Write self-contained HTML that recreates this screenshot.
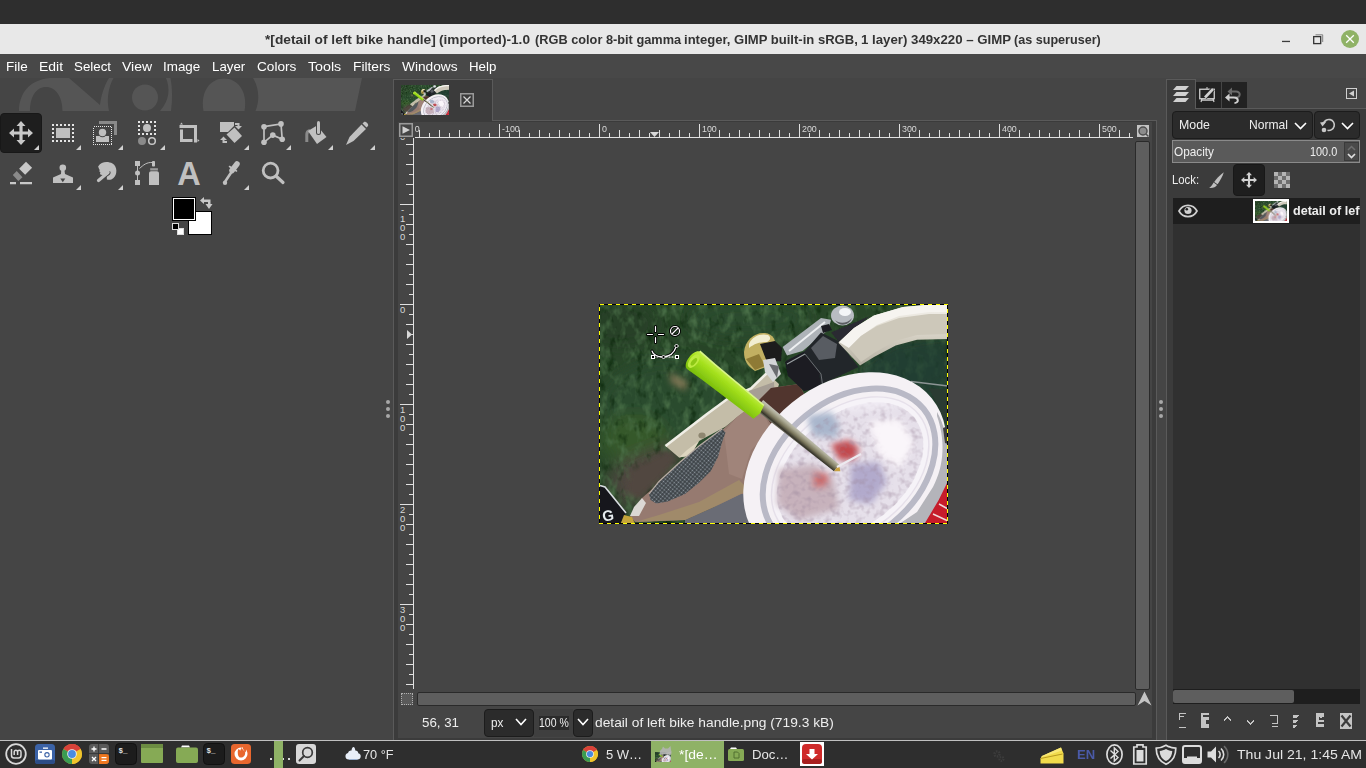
<!DOCTYPE html>
<html><head><meta charset="utf-8"><title>GIMP</title>
<style>
*{box-sizing:border-box;margin:0;padding:0}
html,body{width:1366px;height:768px;overflow:hidden;background:#454545;font-family:"Liberation Sans",sans-serif;}
.a{position:absolute}
svg{overflow:visible}
#top{left:0;top:0;width:1366px;height:24px;background:#2e2e2e}
#title{left:0;top:24px;width:1366px;height:30px;background:#e8e8e8;color:#333;font-weight:bold;font-size:13.17px;line-height:30px;white-space:nowrap}
#title span{position:absolute;top:0.5px}
#menu{left:0;top:54px;width:1366px;height:24px;background:#484848;color:#fff;font-size:13.4px;line-height:24px;white-space:nowrap}
#menu span{position:absolute;top:1px}
#tbox{left:0;top:78px;width:393px;height:662px;background:#454545}
#taskbar{left:0;top:740px;width:1366px;height:28px;background:#2e2e2e;color:#e6e6e6;font-size:14.5px;white-space:nowrap}
#winedge{left:0;top:740px;width:1366px;height:1px;background:#c0c0c0}
.tool{position:absolute;width:42px;height:40px}
.tri{position:absolute;width:0;height:0;border-left:5px solid transparent;border-bottom:5px solid #d0d0d0}
</style></head><body>
<svg width="0" height="0" style="position:absolute"><defs>
<filter id="pb" x="-5%" y="-5%" width="110%" height="110%"><feGaussianBlur stdDeviation="0.7"/></filter>
<filter id="pb3" x="-20%" y="-20%" width="140%" height="140%"><feGaussianBlur stdDeviation="3"/></filter>
<filter id="pb8" x="-30%" y="-30%" width="160%" height="160%"><feGaussianBlur stdDeviation="8"/></filter>
<filter id="grassf" x="0" y="0" width="100%" height="100%" color-interpolation-filters="sRGB"><feTurbulence type="fractalNoise" baseFrequency="0.11 0.07" numOctaves="3" seed="7" result="n"/><feColorMatrix in="n" type="matrix" values="0 0 0 0 0.30  0 0 0 0 0.45  0 0 0 0 0.29  2.6 0 0 0 -1.25" result="l"/><feColorMatrix in="n" type="matrix" values="0 0 0 0 0.03  0 0 0 0 0.14  0 0 0 0 0.03  0 -2.6 0 0 1.15" result="d"/><feMerge><feMergeNode in="d"/><feMergeNode in="l"/></feMerge></filter>
<filter id="lidf" x="0" y="0" width="100%" height="100%" color-interpolation-filters="sRGB"><feTurbulence type="fractalNoise" baseFrequency="0.16" numOctaves="2" seed="3" result="n"/><feColorMatrix in="n" type="matrix" values="0 0 0 0 0.62  0 0 0 0 0.54  0 0 0 0 0.62  0 2.6 0 0 -1.2"/></filter>
<clipPath id="lidclip"><ellipse cx="3" cy="4.500" rx="83" ry="56" transform="translate(246 164.400) rotate(-39)"/></clipPath>
<pattern id="diam" width="3" height="3" patternUnits="userSpaceOnUse" patternTransform="rotate(40)"><rect width="3" height="3" fill="#30363a"/><rect x="0.600" y="0.600" width="1.800" height="1.800" fill="#8d959c"/></pattern>
<linearGradient id="gstraw" x1="0" y1="0" x2="1" y2="0" gradientTransform="rotate(90)"><stop offset="0" stop-color="#c4ee4a"/><stop offset="0.350" stop-color="#a4e01c"/><stop offset="1" stop-color="#78bc0c"/></linearGradient>
<linearGradient id="mstraw" x1="0" y1="0" x2="0" y2="1"><stop offset="0" stop-color="#c4c4bc"/><stop offset="0.250" stop-color="#aeac96"/><stop offset="0.550" stop-color="#7c785e"/><stop offset="0.820" stop-color="#36342a"/><stop offset="1" stop-color="#8a8878"/></linearGradient>
<linearGradient id="tapeg" x1="0" y1="0" x2="0" y2="1"><stop offset="0" stop-color="#f6f4f0"/><stop offset="0.300" stop-color="#e4e0d6"/><stop offset="0.600" stop-color="#cfcabd"/><stop offset="1" stop-color="#b4afa2"/></linearGradient>
<clipPath id="pclip"><rect width="349" height="220"/></clipPath>
<g id="photo" clip-path="url(#pclip)">
<rect width="349" height="220" fill="#284628"/>
<g filter="url(#pb8)">
<ellipse cx="70" cy="100" rx="70" ry="45" fill="#2c4c2d"/>
<ellipse cx="20" cy="20" rx="40" ry="25" fill="#263f26"/>
<ellipse cx="150" cy="15" rx="60" ry="18" fill="#2c4c2e"/>
<ellipse cx="35" cy="135" rx="35" ry="25" fill="#34582c"/>
<path d="M22 157L72 139L80 153L67 173L43 195L31 207L20 196L6 178Z" fill="#4e4640"/>
<ellipse cx="310" cy="65" rx="45" ry="30" fill="#2a4636"/>
</g>
<rect width="349" height="220" filter="url(#grassf)" opacity="0.9"/>
<g filter="url(#pb3)"><path d="M262 62L296 42L349 34L349 125L262 80Z" fill="#213a33" opacity="0.650"/><path d="M30 165L70 145L78 156L60 178L40 196L26 190Z" fill="#51473f"/><path d="M70 68l19 10l-3 9l-14-8z" fill="#7d7352"/></g>
<g filter="url(#pb)">
<!-- right bg cable -->
<path d="M312 77.500L349 82" stroke="#8c9494" stroke-width="1.500"/>
<path d="M330 84L349 86V125L340 105Z" fill="#2a3a30"/>
<!-- pavement -->
<path d="M86 216L115 203L142 188L165 195L170 220L86 220Z" fill="#6a6c74"/>
<!-- brake lever -->
<path d="M66.500 142L108 110L129 94.500L152 84.500L168 69L180 80L175 100L140 112L126 123L100 137L91.500 151.500L80 153.500Z" fill="#c4bda8"/>
<path d="M66.500 142L108 110L129 94.500L152 84.500L168 69" fill="none" stroke="#f0eee6" stroke-width="2.500"/>
<path d="M150 87L175 78L176 100L150 104Z" fill="#a69e94"/>
<ellipse cx="103" cy="131.500" rx="3.600" ry="3" fill="#8e8670"/>
<path d="M80 153.500L91.500 151.500L100 137L88 146Z" fill="#ddd6c0"/>
<!-- grip -->
<path d="M31 212L43 194L60 179L80 160L100 143L123 126L138 113L150 104L160 96L172 84L200 80L210 100L190 125L180 130L165 150L160 190L142 190L115 203L86 216L36 218Z" fill="#967a70"/>
<path d="M150 104L160 96L172 84L200 80L210 100L190 125L175 124L165 110Z" fill="#51362f"/>
<path d="M125 128L138 113L150 104L165 110L172 126L152 146L143 175L130 170Z" fill="#a0847a"/>
<path d="M150 186L115 203L86 216L36 218L60 211L100 198L140 176Z" fill="#a08a6a"/>
<path d="M51.600 196L50 190L60 177.500L80 159L100 142L123 125L126.500 128.600L123 138.600L119 153L111.700 167.300L100 178.700L86 190L68.700 197.400L57.300 199.500Z" fill="url(#diam)"/>
<path d="M50 190L60 177.500L80 159L100 142L123 125" fill="none" stroke="#b8aca4" stroke-width="1.200"/>
<path d="M31 212L35 203L43 194L47 199L40 212Z" fill="#dcd8d4"/>
<!-- reflector -->
<path d="M0 181L6 183L27 209L21.500 220L0 220Z" fill="#12161a"/>
<path d="M1 181.500L6 183L27 209" fill="none" stroke="#d8dce0" stroke-width="1.600"/>
<path d="M21.500 220L25 211L33 213L36 220Z" fill="#c4a43a"/><text x="3" y="216.500" font-size="15" font-weight="bold" fill="#e8ecf0" font-family="Liberation Sans, sans-serif" transform="rotate(-8 10 210)">G</text>
<!-- bell -->
<path d="M145 48C146 36 156 28 166 29C174 30 178 36 176 46L170 62L156 67C148 62 145 56 145 48Z" fill="#c2b062"/>
<path d="M150 40C153 32 162 29 169 31C172 33 172 36 168 38C160 38 155 40 150 44Z" fill="#f2eed2"/>
<path d="M147 55L156 66L166 62L160 50Z" fill="#8e7a34"/>
<path d="M161 40L176 37L183 44L182 57L168 58Z" fill="#1a1a1c"/>
<path d="M164 56L176 54L182 70L174 78L166 68Z" fill="#d4d6d8"/>
<path d="M170 60L180 62L178 74Z" fill="#6a6c70"/>
<!-- chrome mount -->
<path d="M183.600 43L222 14L232 15.700L229.400 25.800L203.600 47L188 51.500Z" fill="#aeb3b8"/>
<path d="M190 47L226 18" stroke="#eef0f2" stroke-width="2"/>
<ellipse cx="243.500" cy="11.500" rx="11.500" ry="10" fill="#b8bcc2"/>
<ellipse cx="246" cy="8" rx="6" ry="4" fill="#f4f6f8"/>
<path d="M236 16C240 20 248 20 253 14C250 22 240 23 236 16Z" fill="#5a5c60"/>
<path d="M222 22l8-2l3 6l-9 3z" fill="#1c1e20"/>
<!-- strap -->
<path d="M205.800 47L222 28.600L239.400 37L259.500 63L232 76L205 87L189 71.600L186.500 57Z" fill="#23272b"/>
<path d="M212 44L224 32L238 40L236 54L220 56Z" fill="#585c62"/>
<path d="M232 28.600L271 12L240 38Z" fill="#2a2a30"/>
<path d="M186 58L205 48L220 68L222 84L205 87L189 72Z" fill="#1a1e22"/>
<path d="M188 60L206 50" stroke="#9a9ea2" stroke-width="1.200"/>
<path d="M206 50L222 70L224 84" fill="none" stroke="#6a6e72" stroke-width="1"/>
<!-- tape -->
<path d="M239.400 38.700L255 24L275 11.500L304 3L332.500 0.500L349 0.500L349 35L318 35.800L296.700 41.500L275 53L261 61.600Z" fill="url(#tapeg)"/>
<path d="M240 38L255 24L275 11.500L304 3L332.500 0.500L349 0.500L349 8L330 8L300 12L278 21L262 32L250 44Z" fill="#f6f4f0"/>
<path d="M250 44L262 32L278 22L300 14L330 10L349 10L349 30L318 31L296 37L275 49L262 58Z" fill="#cdc8ba"/>
<!-- cup lid -->
<g transform="translate(246 164.400) rotate(-39)">
<ellipse rx="111.600" ry="84.500" fill="#f5f1f5"/>
<ellipse cx="2.500" cy="3.300" rx="96" ry="69" fill="none" stroke="#b9b9c6" stroke-width="6"/>
<ellipse cx="3" cy="4.500" rx="89" ry="62" fill="#e6e0ea"/>
<ellipse cx="3" cy="4.500" rx="85" ry="58" fill="none" stroke="#f6f3f8" stroke-width="5"/>
</g>
<!-- right wall of cup -->
<path d="M338 112C346 135 346 160 334 183L318 208L300 220L349 220L349 150C348 135 345 120 338 108Z" fill="#b4b4ba"/>
<path d="M349 177L339.700 196L325.400 220L349 220Z" fill="#c61c2c"/>
<path d="M340 200L349 205M334 210L349 217" stroke="#f0d8d8" stroke-width="1.500"/>
<path d="M344 124L349 122L349 140L346 139Z" fill="#3c3c3c"/>
</g>
<g filter="url(#pb3)">
<path d="M208 112L232 108L240 120L238 134L214 132Z" fill="#a9b6cc"/>
<path d="M232 140L250 136L260 144L256 156L240 156Z" fill="#c24a4e"/>
<path d="M252 160L280 158L288 178L272 200L250 196Z" fill="#b2aacc"/>
<path d="M180 165L215 160L235 175L240 205L200 216L178 200Z" fill="#c7b2bc"/>
<path d="M215 168L230 170L228 182L214 184Z" fill="#cc6a6a"/>
<path d="M270 120L300 118L312 140L300 165L280 150Z" fill="#f6f0f6"/>
</g>
<g clip-path="url(#lidclip)"><rect x="140" y="60" width="209" height="160" filter="url(#lidf)" opacity="0.450"/><g filter="url(#pb3)"><path d="M272 118L300 116L314 138L302 162L282 150Z" fill="#faf6fa"/><path d="M236 96L280 92L300 104L250 108Z" fill="#f4f0f6" opacity="0.700"/></g></g>
<g filter="url(#pb)">
<!-- metal straw -->
<g transform="translate(160 101) rotate(39.200)"><path d="M0 -6.500L100 -4.500L100 4L0 6Z" fill="url(#mstraw)"/><path d="M100 -4l5 4l-5 4z" fill="#c8a040"/></g>
<path d="M238 163L262 150" stroke="#eceaf0" stroke-width="2"/>
<!-- green straw -->
<g transform="translate(95.500 57) rotate(38.500)"><path d="M0 -11C-4.500 -11 -6.500 -5 -6.500 0C-6.500 6 -4.500 11 0 11L18 10L82 8.500L84 0L82 -8.500L18 -10Z" fill="url(#gstraw)"/><ellipse cx="-0.500" cy="0.500" rx="4.200" ry="8" fill="#bcea40"/><ellipse cx="0" cy="1" rx="2" ry="4.500" fill="#8cc814"/><path d="M-2 -11L18 -10L82 -8.500" fill="none" stroke="#d8f488" stroke-width="1.600"/></g>
</g>
</g>
</defs></svg>

<div id="top" class="a"></div>
<div id="title" class="a"><span class="fit" style="left:264.80px;transform:scaleX(1.0431);transform-origin:0 50%">*[detail of left bike handle]</span> <span class="fit" style="left:439.40px;transform:scaleX(1.0374);transform-origin:0 50%">(imported)-1.0</span> <span class="fit" style="left:534.50px;transform:scaleX(0.9702);transform-origin:0 50%">(RGB color 8-bit gamma</span> <span class="fit" style="left:683.80px;transform:scaleX(0.9921);transform-origin:0 50%">integer, GIMP built-in sRGB,</span> <span class="fit" style="left:860.70px;transform:scaleX(1.0060);transform-origin:0 50%">1 layer) 349x220 – GIMP</span> <span class="fit" style="left:1014.40px;transform:scaleX(0.9573);transform-origin:0 50%">(as superuser)</span>
<svg class="a" style="left:1270px;top:0" width="96" height="30" viewBox="0 0 96 30">
<rect x="12" y="16.800" width="8" height="1.300" fill="#3c3c3c"/>
<path d="M45.500 10.800h7.200v7.200" fill="none" stroke="#808080" stroke-width="1"/>
<rect x="43.700" y="12.600" width="7" height="7" fill="none" stroke="#333" stroke-width="1.300"/>
<circle cx="80" cy="15" r="9" fill="#8fb266"/>
<path d="M76.200 11.200l7.600 7.600m0-7.600l-7.600 7.600" stroke="#fff" stroke-width="1.300" fill="none"/>
</svg>
</div>
<div id="menu" class="a"><span class="fit" style="left:6.10px;transform:scaleX(1.0056);transform-origin:0 50%">File</span><span class="fit" style="left:38.80px;transform:scaleX(1.0399);transform-origin:0 50%">Edit</span><span class="fit" style="left:73.60px;transform:scaleX(0.9941);transform-origin:0 50%">Select</span><span class="fit" style="left:121.80px;transform:scaleX(1.0453);transform-origin:0 50%">View</span><span class="fit" style="left:163.10px;transform:scaleX(1.0022);transform-origin:0 50%">Image</span><span class="fit" style="left:212.00px;transform:scaleX(0.9910);transform-origin:0 50%">Layer</span><span class="fit" style="left:256.90px;transform:scaleX(1.0154);transform-origin:0 50%">Colors</span><span class="fit" style="left:307.90px;transform:scaleX(1.0619);transform-origin:0 50%">Tools</span><span class="fit" style="left:353.20px;transform:scaleX(1.0260);transform-origin:0 50%">Filters</span><span class="fit" style="left:401.60px;transform:scaleX(1.0234);transform-origin:0 50%">Windows</span><span class="fit" style="left:469.30px;transform:scaleX(0.9910);transform-origin:0 50%">Help</span></div>
<div id="tbox" class="a">
<!-- wilber -->
<svg class="a" style="left:0;top:0;overflow:hidden" width="393" height="33" viewBox="0 78 393 33">
<g fill="#555555">
<path d="M19 111C19 95 28 80 50 78L69 78L100 105C101 96 104 86 109 78L113.500 78C108 88 106.500 100 109 111L62.500 111C62.500 97 56 87 46 87C36 87 30 97 30 111Z"/>
<circle cx="145" cy="97.500" r="13"/>
<path d="M166 78C170 88 170 100 160 111L171 111C172.500 100 172.500 88 170.500 78Z"/>
<path d="M203.500 111C200 92 210 78.500 224 78.500C238 78.500 248 92 244.500 111Z"/>
<path d="M253 78L362 78L355 111L255.500 111C260 100 259 88 253 78Z"/>
</g>
</svg>
<!-- active tool button -->
<div class="a" style="left:0;top:35px;width:42px;height:40px;background:#1e1e1e;border:1px solid #181818;border-radius:4px"></div>
<!-- tool icons: each svg 24x24 -->
<!-- move -->
<svg class="a" style="left:9px;top:43px" width="24" height="24" viewBox="0 0 24 24"><path d="M12 0l4.500 5h-2.900v5.400h5.400v-2.900l5 4.500l-5 4.500v-2.900h-5.400v5.400h2.900l-4.500 5l-4.500-5h2.900v-5.400h-5.400v2.900l-5-4.500l5-4.500v2.900h5.400v-5.400h-2.900z" fill="#c8c8c8"/></svg>
<!-- rect select -->
<svg class="a" style="left:51px;top:43px" width="24" height="24" viewBox="0 0 24 24" shape-rendering="crispEdges"><g fill="#e4e4e4"><path d="M1 3h2v2h-2zM5 3h2v2h-2zM9 3h2v2h-2zM13 3h2v2h-2zM17 3h2v2h-2zM21 3h2v2h-2zM1 19h2v2h-2zM5 19h2v2h-2zM9 19h2v2h-2zM13 19h2v2h-2zM17 19h2v2h-2zM21 19h2v2h-2zM1 7h2v2h-2zM1 11h2v2h-2zM1 15h2v2h-2zM21 7h2v2h-2zM21 11h2v2h-2zM21 15h2v2h-2z"/></g><rect x="5" y="7" width="14" height="10" fill="#c0c0c0"/></svg>
<!-- foreground select -->
<svg class="a" style="left:93px;top:43px" width="24" height="24" viewBox="0 0 24 24"><path d="M6 0h18v14h-3v-11h-15z" fill="#8a8a8a"/><rect x="0.500" y="5.500" width="18" height="18" fill="none" stroke="#e4e4e4" stroke-width="1" stroke-dasharray="1 1" shape-rendering="crispEdges"/><circle cx="9.500" cy="11.500" r="3.700" fill="#c0c0c0"/><path d="M3 15h3.500a3.500 2.500 0 0 0 6 0h3.500v6h-13z" fill="#c0c0c0"/></svg>
<!-- select by color -->
<svg class="a" style="left:135px;top:43px" width="24" height="24" viewBox="0 0 24 24"><g fill="#e4e4e4" shape-rendering="crispEdges"><path d="M3 0h2v2h-2zM7 0h2v2h-2zM11 0h2v2h-2zM15 0h2v2h-2zM19 0h2v2h-2zM3 12h2v2h-2zM7 12h2v2h-2zM11 12h2v2h-2zM15 12h2v2h-2zM19 12h2v2h-2zM3 4h2v2h-2zM3 8h2v2h-2zM19 4h2v2h-2zM19 8h2v2h-2z"/></g><circle cx="12" cy="7" r="4" fill="#c0c0c0"/><circle cx="7" cy="20" r="4" fill="#8a8a8a"/><circle cx="17" cy="20" r="3.300" fill="none" stroke="#c8c8c8" stroke-width="1.500"/></svg>
<!-- crop -->
<svg class="a" style="left:177px;top:43px" width="24" height="24" viewBox="0 0 24 24"><path d="M2.500 4v3h14.500v14.500h3v-17.500z" fill="#c0c0c0"/><path d="M3 8.500h3v9.500h9.500v3h-12.500z" fill="#c0c0c0"/><path d="M3 3.500l1.500-2l1.500 2zM20.500 18l2 1.500l-2 1.500z" fill="#c0c0c0"/></svg>
<!-- unified transform -->
<svg class="a" style="left:219px;top:43px" width="24" height="24" viewBox="0 0 24 24"><path d="M1 1h14v4l-6 6h-8z" fill="#c0c0c0"/><path d="M15.500 6.500l7.500 8.500l-7.500 7l-8-8.500z" fill="#c0c0c0"/><path d="M16 2h4.500v3h2.500l-3.500 3.500l-3.500-3.500h2.500v-1h-2.500z" fill="#c0c0c0"/><path d="M8 22h-4.500v-3h-2.500l3.500-3.500l3.500 3.500h-2.500v1h2.500z" fill="#c0c0c0"/></svg>
<!-- cage -->
<svg class="a" style="left:261px;top:43px" width="24" height="24" viewBox="0 0 24 24"><path d="M3 5.700L20 2.900L21.200 18.200L11.800 14.100L3 21.300Z" fill="none" stroke="#c0c0c0" stroke-width="1.700"/><g fill="#c0c0c0"><circle cx="3" cy="5.700" r="2.800"/><circle cx="20" cy="2.900" r="2.800"/><circle cx="21.200" cy="18.200" r="2.800"/><circle cx="11.800" cy="14.100" r="2.800"/><circle cx="3" cy="21.300" r="2.800"/></g></svg>
<!-- bucket -->
<svg class="a" style="left:303px;top:43px" width="24" height="24" viewBox="0 0 24 24"><path d="M3.800 21v-7.500c0-2 1-3.500 3.200-4" fill="none" stroke="#8a8a8a" stroke-width="3"/><path d="M5 10l9-5.500l9.500 11.500l-9.500 7z" fill="#c0c0c0"/><path d="M15.500 1.500v10" stroke="#454545" stroke-width="5" stroke-linecap="round"/><path d="M15.500 1.500v10" stroke="#c0c0c0" stroke-width="3" stroke-linecap="round"/></svg>
<!-- pencil -->
<svg class="a" style="left:345px;top:43px" width="24" height="24" viewBox="0 0 24 24"><path d="M1 24l3.500-8l12-12.500l4.500 4.500l-12.500 12z" fill="#c0c0c0"/><path d="M17.500 2.500l1.500-1.500c1.500-1 5 2 4 4l-1.500 1.500z" fill="#c0c0c0"/></svg>
<!-- row 2 -->
<!-- eraser -->
<svg class="a" style="left:9px;top:83px" width="24" height="24" viewBox="0 0 24 24"><path d="M17 0.700l6.100 6.100l-7 7l-6-6.100z" fill="#c8c8c8"/><path d="M7.700 10.100l5.800 6.100l-4.200 3.700l-5.500-5.800z" fill="#8a8a8a"/><path d="M1 21h6v2.200h-6zM11 21h12v2.200h-12z" fill="#c8c8c8"/></svg>
<!-- clone -->
<svg class="a" style="left:51px;top:83px" width="24" height="24" viewBox="0 0 24 24"><circle cx="11.800" cy="6.800" r="3.300" fill="#c0c0c0"/><path d="M10.300 8h3l0.700 5l8 3.500v5.500h-20v-5.500l8-3.500z" fill="#c0c0c0"/><path d="M9.300 17.500h5l-2.500 3.800z" fill="#454545"/></svg>
<!-- smudge -->
<svg class="a" style="left:93px;top:83px" width="24" height="24" viewBox="0 0 24 24"><path d="M5.500 5C8 0.500 15 0 19.500 2.500C24.500 5.500 24.500 13.500 20.500 17C18.500 19 15 19.500 13.500 18C12.500 17 13 15.500 14.500 14.500L9.500 14C7 14 6.500 12.500 7.500 11.500C6 10.500 6 9.500 7 9C6 8.200 5.500 7.500 6 7C5 6.500 5 5.800 5.500 5Z" fill="#c0c0c0"/><path d="M13.500 17.800C12.500 16.500 13.500 15 15 14.200C17 13 17.500 11.500 16.500 10.500" fill="none" stroke="#454545" stroke-width="1.300"/><path d="M5.500 19.500L15 11.500" stroke="#c0c0c0" stroke-width="3.200" stroke-linecap="round"/></svg>
<!-- paths -->
<svg class="a" style="left:135px;top:83px" width="24" height="24" viewBox="0 0 24 24"><path d="M0 0h5v5h-5zM0 19h5v5h-5z" fill="#c0c0c0"/><circle cx="2.500" cy="12" r="2.500" fill="#c0c0c0"/><path d="M2.500 4v16" stroke="#c0c0c0" stroke-width="1"/><path d="M4.500 7.500c4-3.500 7-6.500 13.500-6" fill="none" stroke="#c0c0c0" stroke-width="1"/><rect x="17" y="0" width="3" height="5.500" rx="0.800" fill="#c0c0c0"/><rect x="15.200" y="7.200" width="7.700" height="2.300" fill="#999"/><path d="M14 12.500c0-1.500 1-2.200 2-2.200h6c1 0 2 0.700 2 2.200v11.500h-10z" fill="#c0c0c0"/></svg>
<!-- text -->
<div class="a" style="left:177px;top:79.5px;width:24px;height:32px;font:bold 32.5px/32px 'Liberation Sans',sans-serif;color:#c0c0c0;text-align:center">A</div>
<!-- picker -->
<svg class="a" style="left:219px;top:83px" width="24" height="24" viewBox="0 0 24 24"><path d="M6.500 20l8-12" stroke="#c0c0c0" stroke-width="2.600" stroke-linecap="round"/><path d="M13 9.500l5-6.500" stroke="#c0c0c0" stroke-width="5.500" stroke-linecap="round"/><path d="M10.500 5.500l7 4.500" stroke="#c0c0c0" stroke-width="1.500" stroke-linecap="round"/><circle cx="6" cy="21.700" r="2.200" fill="#c0c0c0"/></svg>
<!-- zoom -->
<svg class="a" style="left:261px;top:83px" width="24" height="24" viewBox="0 0 24 24"><circle cx="9.600" cy="9.600" r="7.400" fill="none" stroke="#c0c0c0" stroke-width="2.800"/><path d="M15.500 15.500l6.500 6" stroke="#c0c0c0" stroke-width="3.200" stroke-linecap="round"/></svg>
<!-- triangles -->
<div class="tri" style="left:34px;top:67px"></div><div class="tri" style="left:76px;top:67px"></div><div class="tri" style="left:118px;top:67px"></div><div class="tri" style="left:160px;top:67px"></div><div class="tri" style="left:244px;top:67px"></div><div class="tri" style="left:286px;top:67px"></div><div class="tri" style="left:328px;top:67px"></div><div class="tri" style="left:370px;top:67px"></div>
<div class="tri" style="left:76px;top:107px"></div><div class="tri" style="left:118px;top:107px"></div><div class="tri" style="left:244px;top:107px"></div>
<!-- colors -->
<div class="a" style="left:188px;top:133px;width:24px;height:24px;background:#fff;border:1px solid #000"></div>
<div class="a" style="left:172px;top:119px;width:24px;height:24px;background:#000;border:1px solid #000;box-shadow:inset 0 0 0 1px #fff"></div>
<div class="a" style="left:177px;top:150px;width:7px;height:7px;background:#fff;border:1px solid #ddd"></div>
<div class="a" style="left:172px;top:145px;width:7px;height:7px;background:#000;border:1px solid #ddd"></div>
<svg class="a" style="left:200px;top:119px" width="12" height="12" viewBox="0 0 12 12"><path d="M0 3.500l4-3.500v2.500h6.500v4.500h2l-3.500 5l-3.500-5h2.500v-2h-4v2z" fill="#c8c8c8"/></svg>
</div>
<!-- separator handle dots left -->
<div class="a" style="left:385.500px;top:400px;width:4px;height:4px;border-radius:50%;background:#a8a8a8;box-shadow:0 7px 0 #a8a8a8,0 14px 0 #a8a8a8"></div>
<!-- image window -->
<div class="a" style="left:393px;top:120px;width:764px;height:620px;background:#3b3b3b;border:1px solid #5a5a5a;border-bottom:none"></div>
<div class="a" style="left:393px;top:79px;width:100px;height:42px;background:#3b3b3b;border:1px solid #5a5a5a;border-bottom:none"></div>
<div class="a" style="left:398px;top:122px;width:754px;height:584px;background:#454545"></div>
<!-- tab thumb + close -->
<svg class="a" style="left:401px;top:85px" width="48" height="30" viewBox="0 0 349 220" preserveAspectRatio="none"><use href="#photo"/></svg>
<svg class="a" style="left:460px;top:93px" width="14" height="14" viewBox="0 0 14 14"><rect x="0.750" y="0.750" width="12.500" height="12.500" fill="none" stroke="#9a9a9a" stroke-width="1.500"/><path d="M3.500 3.500l7 7m0-7l-7 7" stroke="#d8d8d8" stroke-width="1.200" fill="none"/></svg>
<!-- ruler corner -->
<svg class="a" style="left:399px;top:123px" width="14" height="14" viewBox="0 0 14 14"><rect x="0.750" y="0.750" width="12.500" height="12.500" fill="none" stroke="#9a9a9a" stroke-width="1.500"/><path d="M3.500 3.200l7.500 3.800l-7.500 3.800z" fill="#d0d0d0"/></svg>
<!-- zoom corner -->
<svg class="a" style="left:1137px;top:125px" width="12" height="12" viewBox="0 0 12 12"><rect width="12" height="12" fill="#c4c4c4"/><circle cx="6" cy="6" r="4" fill="#8c8c8c" stroke="#505050" stroke-width="1.500"/><path d="M9 9l2.500 2.500" stroke="#505050" stroke-width="1.500"/></svg>
<!-- scrollbars -->
<div class="a" style="left:1135px;top:141px;width:15px;height:549px;background:#5e5e5e;border:1px solid #2a2a2a;border-radius:2px"></div>
<div class="a" style="left:417px;top:692px;width:719px;height:14px;background:#5e5e5e;border:1px solid #2a2a2a;border-radius:2px"></div>
<!-- quick mask -->
<div class="a" style="left:401px;top:693px;width:12px;height:12px;background:#5a5a5a;border:1px dotted #b0b0b0"></div>
<!-- nav -->
<svg class="a" style="left:1137px;top:691px" width="15" height="15" viewBox="0 0 15 15"><path d="M7.500 0.500l7 14l-7-4.500l-7 4.500z" fill="#c4c4c4"/></svg>
<!-- status bar -->
<div class="a" style="left:398px;top:706px;width:754px;height:32px;background:#454545"></div>
<div class="a" style="left:394px;top:706px;width:762px;height:33px;color:#eee;font-size:13.3px;white-space:nowrap">
<span class="a fit" style="left:27.90px;transform:scaleX(1.0004);transform-origin:0 50%;top:9px">56, 31</span>
<div class="a" style="left:90px;top:3px;width:50px;height:28px;background:#2b2b2b;border:1px solid #1c1c1c;border-radius:4px"><span class="a fit" style="left:5.90px;transform:scaleX(0.8828);transform-origin:0 50%;top:5px">px</span>
<svg class="a" style="left:30px;top:8px" width="12" height="8" viewBox="0 0 12 8"><path d="M1 1l5 5.500l5-5.500" fill="none" stroke="#fff" stroke-width="1.600"/></svg></div>
<div class="a" style="left:140px;top:3px;width:39px;height:28px;background:#3f3f3f"><span class="a" style="left:5px;top:7px;width:30px;height:14px;background:#2b2b2b"></span><span class="a fit" style="left:5.20px;transform:scaleX(0.8315);transform-origin:0 50%;top:6.500px;font-size:12.600px">100 %</span></div>
<div class="a" style="left:179px;top:3px;width:20px;height:28px;background:#2b2b2b;border:1px solid #1c1c1c;border-radius:4px">
<svg class="a" style="left:3px;top:8px" width="12" height="8" viewBox="0 0 12 8"><path d="M1 1l5 5.500l5-5.500" fill="none" stroke="#fff" stroke-width="1.600"/></svg></div>
<span class="a fit" style="left:200.80px;transform:scaleX(1.0281);transform-origin:0 50%;top:9px;font-size:13.400px">detail of left bike handle.png (719.3 kB)</span>
</div>
<svg class="a" style="overflow:hidden;left:415px;top:122px" width="718" height="16" viewBox="415 122 718 16" shape-rendering="crispEdges"><rect x="415" y="137" width="718" height="1" fill="#e0e0e0"/><text x="402" y="132" font-size="8.9" fill="#d8d8d8" font-family="Liberation Sans, sans-serif">-200</text><rect x="419" y="130" width="1" height="7" fill="#e0e0e0"/><rect x="429" y="133" width="1" height="4" fill="#e0e0e0"/><rect x="439" y="130" width="1" height="7" fill="#e0e0e0"/><rect x="449" y="133" width="1" height="4" fill="#e0e0e0"/><rect x="459" y="130" width="1" height="7" fill="#e0e0e0"/><rect x="469" y="133" width="1" height="4" fill="#e0e0e0"/><rect x="479" y="130" width="1" height="7" fill="#e0e0e0"/><rect x="489" y="133" width="1" height="4" fill="#e0e0e0"/><rect x="499" y="124" width="1" height="13" fill="#e0e0e0"/><text x="502" y="132" font-size="8.9" fill="#d8d8d8" font-family="Liberation Sans, sans-serif">-100</text><rect x="509" y="133" width="1" height="4" fill="#e0e0e0"/><rect x="519" y="130" width="1" height="7" fill="#e0e0e0"/><rect x="529" y="133" width="1" height="4" fill="#e0e0e0"/><rect x="539" y="130" width="1" height="7" fill="#e0e0e0"/><rect x="549" y="133" width="1" height="4" fill="#e0e0e0"/><rect x="559" y="130" width="1" height="7" fill="#e0e0e0"/><rect x="569" y="133" width="1" height="4" fill="#e0e0e0"/><rect x="579" y="130" width="1" height="7" fill="#e0e0e0"/><rect x="589" y="133" width="1" height="4" fill="#e0e0e0"/><rect x="599" y="124" width="1" height="13" fill="#e0e0e0"/><text x="602" y="132" font-size="8.9" fill="#d8d8d8" font-family="Liberation Sans, sans-serif">0</text><rect x="609" y="133" width="1" height="4" fill="#e0e0e0"/><rect x="619" y="130" width="1" height="7" fill="#e0e0e0"/><rect x="629" y="133" width="1" height="4" fill="#e0e0e0"/><rect x="639" y="130" width="1" height="7" fill="#e0e0e0"/><rect x="649" y="133" width="1" height="4" fill="#e0e0e0"/><rect x="659" y="130" width="1" height="7" fill="#e0e0e0"/><rect x="669" y="133" width="1" height="4" fill="#e0e0e0"/><rect x="679" y="130" width="1" height="7" fill="#e0e0e0"/><rect x="689" y="133" width="1" height="4" fill="#e0e0e0"/><rect x="699" y="124" width="1" height="13" fill="#e0e0e0"/><text x="702" y="132" font-size="8.9" fill="#d8d8d8" font-family="Liberation Sans, sans-serif">100</text><rect x="709" y="133" width="1" height="4" fill="#e0e0e0"/><rect x="719" y="130" width="1" height="7" fill="#e0e0e0"/><rect x="729" y="133" width="1" height="4" fill="#e0e0e0"/><rect x="739" y="130" width="1" height="7" fill="#e0e0e0"/><rect x="749" y="133" width="1" height="4" fill="#e0e0e0"/><rect x="759" y="130" width="1" height="7" fill="#e0e0e0"/><rect x="769" y="133" width="1" height="4" fill="#e0e0e0"/><rect x="779" y="130" width="1" height="7" fill="#e0e0e0"/><rect x="789" y="133" width="1" height="4" fill="#e0e0e0"/><rect x="799" y="124" width="1" height="13" fill="#e0e0e0"/><text x="802" y="132" font-size="8.9" fill="#d8d8d8" font-family="Liberation Sans, sans-serif">200</text><rect x="809" y="133" width="1" height="4" fill="#e0e0e0"/><rect x="819" y="130" width="1" height="7" fill="#e0e0e0"/><rect x="829" y="133" width="1" height="4" fill="#e0e0e0"/><rect x="839" y="130" width="1" height="7" fill="#e0e0e0"/><rect x="849" y="133" width="1" height="4" fill="#e0e0e0"/><rect x="859" y="130" width="1" height="7" fill="#e0e0e0"/><rect x="869" y="133" width="1" height="4" fill="#e0e0e0"/><rect x="879" y="130" width="1" height="7" fill="#e0e0e0"/><rect x="889" y="133" width="1" height="4" fill="#e0e0e0"/><rect x="899" y="124" width="1" height="13" fill="#e0e0e0"/><text x="902" y="132" font-size="8.9" fill="#d8d8d8" font-family="Liberation Sans, sans-serif">300</text><rect x="909" y="133" width="1" height="4" fill="#e0e0e0"/><rect x="919" y="130" width="1" height="7" fill="#e0e0e0"/><rect x="929" y="133" width="1" height="4" fill="#e0e0e0"/><rect x="939" y="130" width="1" height="7" fill="#e0e0e0"/><rect x="949" y="133" width="1" height="4" fill="#e0e0e0"/><rect x="959" y="130" width="1" height="7" fill="#e0e0e0"/><rect x="969" y="133" width="1" height="4" fill="#e0e0e0"/><rect x="979" y="130" width="1" height="7" fill="#e0e0e0"/><rect x="989" y="133" width="1" height="4" fill="#e0e0e0"/><rect x="999" y="124" width="1" height="13" fill="#e0e0e0"/><text x="1002" y="132" font-size="8.9" fill="#d8d8d8" font-family="Liberation Sans, sans-serif">400</text><rect x="1009" y="133" width="1" height="4" fill="#e0e0e0"/><rect x="1019" y="130" width="1" height="7" fill="#e0e0e0"/><rect x="1029" y="133" width="1" height="4" fill="#e0e0e0"/><rect x="1039" y="130" width="1" height="7" fill="#e0e0e0"/><rect x="1049" y="133" width="1" height="4" fill="#e0e0e0"/><rect x="1059" y="130" width="1" height="7" fill="#e0e0e0"/><rect x="1069" y="133" width="1" height="4" fill="#e0e0e0"/><rect x="1079" y="130" width="1" height="7" fill="#e0e0e0"/><rect x="1089" y="133" width="1" height="4" fill="#e0e0e0"/><rect x="1099" y="124" width="1" height="13" fill="#e0e0e0"/><text x="1102" y="132" font-size="8.9" fill="#d8d8d8" font-family="Liberation Sans, sans-serif">500</text><rect x="1109" y="133" width="1" height="4" fill="#e0e0e0"/><rect x="1119" y="130" width="1" height="7" fill="#e0e0e0"/><rect x="1129" y="133" width="1" height="4" fill="#e0e0e0"/></svg>
<svg class="a" style="overflow:hidden;left:398px;top:138px" width="16" height="551" viewBox="398 138 16 551" shape-rendering="crispEdges"><rect x="413" y="138" width="1" height="551" fill="#e0e0e0"/><text x="401" y="113" font-size="9.5" fill="#d8d8d8" font-family="Liberation Sans, sans-serif">-</text><text x="400" y="122" font-size="9.5" fill="#d8d8d8" font-family="Liberation Sans, sans-serif">2</text><text x="400" y="131" font-size="9.5" fill="#d8d8d8" font-family="Liberation Sans, sans-serif">0</text><text x="400" y="140" font-size="9.5" fill="#d8d8d8" font-family="Liberation Sans, sans-serif">0</text><rect x="406" y="144" width="7" height="1" fill="#e0e0e0"/><rect x="409" y="154" width="4" height="1" fill="#e0e0e0"/><rect x="406" y="164" width="7" height="1" fill="#e0e0e0"/><rect x="409" y="174" width="4" height="1" fill="#e0e0e0"/><rect x="406" y="184" width="7" height="1" fill="#e0e0e0"/><rect x="409" y="194" width="4" height="1" fill="#e0e0e0"/><rect x="400" y="204" width="13" height="1" fill="#e0e0e0"/><text x="401" y="213" font-size="9.5" fill="#d8d8d8" font-family="Liberation Sans, sans-serif">-</text><text x="400" y="222" font-size="9.5" fill="#d8d8d8" font-family="Liberation Sans, sans-serif">1</text><text x="400" y="231" font-size="9.5" fill="#d8d8d8" font-family="Liberation Sans, sans-serif">0</text><text x="400" y="240" font-size="9.5" fill="#d8d8d8" font-family="Liberation Sans, sans-serif">0</text><rect x="409" y="214" width="4" height="1" fill="#e0e0e0"/><rect x="406" y="224" width="7" height="1" fill="#e0e0e0"/><rect x="409" y="234" width="4" height="1" fill="#e0e0e0"/><rect x="406" y="244" width="7" height="1" fill="#e0e0e0"/><rect x="409" y="254" width="4" height="1" fill="#e0e0e0"/><rect x="406" y="264" width="7" height="1" fill="#e0e0e0"/><rect x="409" y="274" width="4" height="1" fill="#e0e0e0"/><rect x="406" y="284" width="7" height="1" fill="#e0e0e0"/><rect x="409" y="294" width="4" height="1" fill="#e0e0e0"/><rect x="400" y="304" width="13" height="1" fill="#e0e0e0"/><text x="400" y="313" font-size="9.5" fill="#d8d8d8" font-family="Liberation Sans, sans-serif">0</text><rect x="409" y="314" width="4" height="1" fill="#e0e0e0"/><rect x="406" y="324" width="7" height="1" fill="#e0e0e0"/><rect x="409" y="334" width="4" height="1" fill="#e0e0e0"/><rect x="406" y="344" width="7" height="1" fill="#e0e0e0"/><rect x="409" y="354" width="4" height="1" fill="#e0e0e0"/><rect x="406" y="364" width="7" height="1" fill="#e0e0e0"/><rect x="409" y="374" width="4" height="1" fill="#e0e0e0"/><rect x="406" y="384" width="7" height="1" fill="#e0e0e0"/><rect x="409" y="394" width="4" height="1" fill="#e0e0e0"/><rect x="400" y="404" width="13" height="1" fill="#e0e0e0"/><text x="400" y="413" font-size="9.5" fill="#d8d8d8" font-family="Liberation Sans, sans-serif">1</text><text x="400" y="422" font-size="9.5" fill="#d8d8d8" font-family="Liberation Sans, sans-serif">0</text><text x="400" y="431" font-size="9.5" fill="#d8d8d8" font-family="Liberation Sans, sans-serif">0</text><rect x="409" y="414" width="4" height="1" fill="#e0e0e0"/><rect x="406" y="424" width="7" height="1" fill="#e0e0e0"/><rect x="409" y="434" width="4" height="1" fill="#e0e0e0"/><rect x="406" y="444" width="7" height="1" fill="#e0e0e0"/><rect x="409" y="454" width="4" height="1" fill="#e0e0e0"/><rect x="406" y="464" width="7" height="1" fill="#e0e0e0"/><rect x="409" y="474" width="4" height="1" fill="#e0e0e0"/><rect x="406" y="484" width="7" height="1" fill="#e0e0e0"/><rect x="409" y="494" width="4" height="1" fill="#e0e0e0"/><rect x="400" y="504" width="13" height="1" fill="#e0e0e0"/><text x="400" y="513" font-size="9.5" fill="#d8d8d8" font-family="Liberation Sans, sans-serif">2</text><text x="400" y="522" font-size="9.5" fill="#d8d8d8" font-family="Liberation Sans, sans-serif">0</text><text x="400" y="531" font-size="9.5" fill="#d8d8d8" font-family="Liberation Sans, sans-serif">0</text><rect x="409" y="514" width="4" height="1" fill="#e0e0e0"/><rect x="406" y="524" width="7" height="1" fill="#e0e0e0"/><rect x="409" y="534" width="4" height="1" fill="#e0e0e0"/><rect x="406" y="544" width="7" height="1" fill="#e0e0e0"/><rect x="409" y="554" width="4" height="1" fill="#e0e0e0"/><rect x="406" y="564" width="7" height="1" fill="#e0e0e0"/><rect x="409" y="574" width="4" height="1" fill="#e0e0e0"/><rect x="406" y="584" width="7" height="1" fill="#e0e0e0"/><rect x="409" y="594" width="4" height="1" fill="#e0e0e0"/><rect x="400" y="604" width="13" height="1" fill="#e0e0e0"/><text x="400" y="613" font-size="9.5" fill="#d8d8d8" font-family="Liberation Sans, sans-serif">3</text><text x="400" y="622" font-size="9.5" fill="#d8d8d8" font-family="Liberation Sans, sans-serif">0</text><text x="400" y="631" font-size="9.5" fill="#d8d8d8" font-family="Liberation Sans, sans-serif">0</text><rect x="409" y="614" width="4" height="1" fill="#e0e0e0"/><rect x="406" y="624" width="7" height="1" fill="#e0e0e0"/><rect x="409" y="634" width="4" height="1" fill="#e0e0e0"/><rect x="406" y="644" width="7" height="1" fill="#e0e0e0"/><rect x="409" y="654" width="4" height="1" fill="#e0e0e0"/><rect x="406" y="664" width="7" height="1" fill="#e0e0e0"/><rect x="409" y="674" width="4" height="1" fill="#e0e0e0"/><rect x="406" y="684" width="7" height="1" fill="#e0e0e0"/><text x="400" y="713" font-size="9.5" fill="#d8d8d8" font-family="Liberation Sans, sans-serif">4</text><text x="400" y="722" font-size="9.5" fill="#d8d8d8" font-family="Liberation Sans, sans-serif">0</text><text x="400" y="731" font-size="9.5" fill="#d8d8d8" font-family="Liberation Sans, sans-serif">0</text></svg>
<!-- ruler pointers -->
<svg class="a" style="left:650px;top:132px" width="10" height="6" viewBox="0 0 10 6"><path d="M0 0h9l-4.500 5z" fill="#d8d8d8"/></svg>
<svg class="a" style="left:407px;top:330px" width="6" height="10" viewBox="0 0 6 10"><path d="M0 0v9l5-4.500z" fill="#d8d8d8"/></svg>
<svg class="a" style="left:599px;top:304px;overflow:hidden" width="349" height="220" viewBox="0 0 349 220"><use href="#photo"/></svg>
<svg class="a" style="left:599px;top:304px" width="349" height="220" viewBox="0 0 349 220" shape-rendering="crispEdges"><rect x="0.500" y="0.500" width="348" height="219" fill="none" stroke="#000" stroke-width="1"/><rect x="0.500" y="0.500" width="348" height="219" fill="none" stroke="#ffff00" stroke-width="1" stroke-dasharray="4 4"/></svg>
<!-- cursor overlay -->
<svg class="a" style="left:640px;top:320px" width="50" height="45" viewBox="640 320 50 45" fill="none">
<g stroke="#000" stroke-width="3" stroke-linecap="round"><path d="M655.500 326.500v5M655.500 337.500v5M647.500 334.500h5M658.500 334.500h5"/><circle cx="675" cy="331" r="4.500"/><path d="M672.500 333.500l5-5"/><path d="M652 351c2 8 20 9 24-4"/></g>
<g stroke="#fff" stroke-width="1.200" stroke-linecap="round"><path d="M655.500 326.500v5M655.500 337.500v5M647.500 334.500h5M658.500 334.500h5"/><circle cx="675" cy="331" r="4.500"/><path d="M672.500 333.500l5-5"/><path d="M652 351c2 8 20 9 24-4"/><path d="M654 357h22" stroke-dasharray="1 2"/></g>
<g fill="#000" stroke="#fff" stroke-width="1"><rect x="651.500" y="355.500" width="3" height="3"/><rect x="675.500" y="355.500" width="3" height="3"/><path d="M663.500 355l2 2l-2 2l-2-2z"/><path d="M676.500 344l2 2l-2 2l-2-2z"/></g>
</svg>

<!-- right handle dots -->
<div class="a" style="left:1158.500px;top:400px;width:4px;height:4px;border-radius:50%;background:#a8a8a8;box-shadow:0 7px 0 #a8a8a8,0 14px 0 #a8a8a8"></div>
<!-- right dock -->
<div class="a" style="left:1166px;top:108px;width:200px;height:632px;background:#3b3b3b;border-left:1px solid #5a5a5a;border-top:1px solid #5a5a5a"></div>
<div class="a" style="left:1166px;top:79px;width:30px;height:30px;background:#3b3b3b;border:1px solid #5a5a5a;border-bottom:none"></div>
<div class="a" style="left:1196px;top:82px;width:25px;height:26px;background:#222"></div>
<div class="a" style="left:1222px;top:82px;width:25px;height:26px;background:#222"></div>
<!-- layers icon -->
<svg class="a" style="left:1173px;top:86px" width="16" height="16" viewBox="0 0 16 16"><g fill="#d0d0d0"><path d="M3.500 0h12.500l-3.500 4h-12.500z"/><path d="M3.500 6h12.500l-3.500 4h-12.500z"/><path d="M3.500 12h12.500l-3.500 4h-12.500z"/></g></svg>
<!-- tool options icon -->
<svg class="a" style="left:1199px;top:86px" width="17" height="17" viewBox="0 0 17 17"><rect x="0.750" y="3.250" width="14.500" height="9.500" fill="none" stroke="#d0d0d0" stroke-width="1.300"/><path d="M2 16l1-3.500m11 0l1 3.500M2.500 14.200h11.500" stroke="#d0d0d0" stroke-width="1.200" fill="none"/><path d="M6 11.500l8-8.500" stroke="#222" stroke-width="4.500"/><path d="M6 11.500l8-8.500" stroke="#d0d0d0" stroke-width="2.600"/><path d="M6.500 2.500l1.500-1.500l1.500 1.500z" fill="#d0d0d0"/></svg>
<!-- undo icon -->
<svg class="a" style="left:1225px;top:87px" width="17" height="17" viewBox="0 0 17 17"><path d="M4 4.500h7c5 0 5 6-0.500 6" fill="none" stroke="#6a6a6a" stroke-width="2"/><path d="M7 0.500v8l-4.500-4z" fill="#6a6a6a"/><path d="M3 10.500h6c5 0 5 5.500 0.500 5.500" fill="none" stroke="#d0d0d0" stroke-width="2"/><path d="M4.500 6.500v8l-4.500-4z" fill="#d0d0d0"/></svg>
<!-- menu button -->
<svg class="a" style="left:1346px;top:88px" width="11" height="11" viewBox="0 0 11 11"><rect x="0.500" y="0.500" width="10" height="10" fill="none" stroke="#d0d0d0" stroke-width="1"/><path d="M8 2.500v6l-5-3z" fill="#d0d0d0"/></svg>
<!-- mode -->
<div class="a" style="left:1172px;top:111px;width:141px;height:28px;background:#2b2b2b;border:1px solid #1c1c1c;border-radius:4px;color:#eee;font-size:13.300px;white-space:nowrap"><span class="a fit" style="left:5.90px;transform:scaleX(0.9289);transform-origin:0 50%;top:5px">Mode</span><span class="a fit" style="left:75.90px;transform:scaleX(0.9076);transform-origin:0 50%;top:5px">Normal</span>
<svg class="a" style="left:121px;top:9.500px" width="13" height="8" viewBox="0 0 13 8"><path d="M1 1l5.500 5.500l5.500-5.500" fill="none" stroke="#fff" stroke-width="1.600"/></svg></div>
<div class="a" style="left:1314px;top:111px;width:46px;height:28px;background:#2b2b2b;border:1px solid #1c1c1c;border-radius:4px">
<svg class="a" style="left:5px;top:5px" width="15" height="16" viewBox="0 0 15 16"><path d="M3.500 6.500a5.500 5.500 0 1 1 4 6.800" fill="none" stroke="#c8c8c8" stroke-width="1.600"/><path d="M0 5.500l6.500-1l-4 5z" fill="#c8c8c8"/><circle cx="4" cy="13" r="2.300" fill="#c8c8c8"/></svg>
<svg class="a" style="left:26px;top:9.500px" width="13" height="8" viewBox="0 0 13 8"><path d="M1 1l5.500 5.500l5.500-5.500" fill="none" stroke="#fff" stroke-width="1.600"/></svg></div>
<!-- opacity -->
<div class="a" style="left:1172px;top:140px;width:188px;height:23px;background:#5a5a5a;border:1px solid #8a8a8a;color:#eee;font-size:13.300px;white-space:nowrap"><span class="a fit" style="left:1.20px;transform:scaleX(0.8870);transform-origin:0 50%;top:2.500px">Opacity</span><span class="a fit" style="left:137.40px;transform:scaleX(0.8173);transform-origin:0 50%;top:2.500px">100.0</span>
<div class="a" style="left:171px;top:1px;width:15px;height:19px;background:#4a4a4a;border:1px solid #3a3a3a"></div>
<svg class="a" style="left:174px;top:4px" width="9" height="14" viewBox="0 0 9 14"><path d="M1 5l3.500-3.500l3.500 3.500" fill="none" stroke="#6e6e6e" stroke-width="1.500"/><path d="M1 9l3.500 3.500l3.500-3.500" fill="none" stroke="#e0e0e0" stroke-width="1.700"/></svg></div>
<!-- lock -->
<span class="a fit" style="left:1172.00px;transform:scaleX(0.8523);transform-origin:0 50%;top:172px;color:#eee;font-size:13.300px;white-space:nowrap">Lock:</span>
<svg class="a" style="left:1209px;top:172px" width="15" height="16" viewBox="0 0 15 16"><path d="M14.800 0.200C10.500 3.200 7 7 5.200 10L8.600 12.200C11 8.800 13.500 4.500 14.800 0.200Z" fill="#c0c0c0"/><path d="M4.600 10.600L8 12.900C6.800 15.300 3.500 16.200 0 15.800C2 15 3.200 13.200 4.600 10.600Z" fill="#c0c0c0"/></svg>
<div class="a" style="left:1233px;top:164px;width:32px;height:32px;background:#1e1e1e;border:1px solid #181818;border-radius:4px"></div>
<svg class="a" style="left:1241px;top:172px" width="16" height="16" viewBox="0 0 24 24"><path d="M12 0l4.500 5h-2.900v5.400h5.400v-2.900l5 4.500l-5 4.500v-2.900h-5.400v5.400h2.900l-4.500 5l-4.500-5h2.900v-5.400h-5.400v2.900l-5-4.500l5-4.500v2.900h5.400v-5.400h-2.900z" fill="#d0d0d0"/></svg>
<svg class="a" style="left:1274px;top:172px" width="16" height="16" viewBox="0 0 16 16" shape-rendering="crispEdges"><rect width="16" height="16" fill="#6e6e6e"/><path d="M0 0h4v4h-4zM8 0h4v4h-4zM4 4h4v4h-4zM12 4h4v4h-4zM0 8h4v4h-4zM8 8h4v4h-4zM4 12h4v4h-4zM12 12h4v4h-4z" fill="#b4b4b4"/></svg>
<!-- layer list -->
<div class="a" style="left:1173px;top:198px;width:187px;height:491px;background:#303030"></div>
<div class="a" style="left:1173px;top:198px;width:187px;height:26px;background:#1e1e1e;overflow:hidden;color:#eee;font-weight:bold;font-size:13.300px;white-space:nowrap"><span class="a fit" style="left:119.80px;transform:scaleX(0.9458);transform-origin:0 50%;top:5px">detail of left bike handle.png</span></div>
<svg class="a" style="left:1178px;top:204px" width="20" height="14" viewBox="0 0 20 14"><path d="M1 7c4-7.500 14-7.500 18 0c-4 7.500-14 7.500-18 0z" fill="none" stroke="#d0d0d0" stroke-width="1.700"/><circle cx="10" cy="6.500" r="3.600" fill="#d0d0d0"/><circle cx="8.800" cy="5.300" r="1.300" fill="#1e1e1e"/></svg>
<div class="a" style="left:1253px;top:199px;width:36px;height:24px;background:#fff"></div>
<svg class="a" style="left:1255px;top:201px" width="32" height="20" viewBox="0 0 349 220" preserveAspectRatio="none"><use href="#photo"/></svg>
<!-- layer scrollbar -->
<div class="a" style="left:1173px;top:689px;width:187px;height:15px;background:#1e1e1e"></div>
<div class="a" style="left:1173px;top:690px;width:121px;height:13px;background:#5e5e5e;border-radius:2px"></div>
<!-- bottom buttons -->
<svg class="a" style="left:1172px;top:711px" width="190" height="20" viewBox="0 0 190 20" shape-rendering="crispEdges">
<g fill="#c4c4c4">
<path d="M7 2h7v1h-6v6h-1zM8 5h4v1h-4zM7 16h7v1h-7z"/>
<path d="M29 2h8v2h-6v2h6v3h-3v4h3v4h-8z"/>
<path d="M73 12l4-4l4 4l-1 1l-3-3l-3 3z" transform="translate(-21.500 -3)"/>
<path d="M73 8l4 4l4-4l-1-1l-3 3l-3-3z" transform="translate(1.500 2)"/>
<path d="M98 4h8v9h-6v-1h5v-7h-7zM100 15h6v1h-6z"/>
<path d="M121 4h6l-2 3h-4zM121 9h5l-2 3h-3zM121 14h4l-3 3h-1z"/>
<path d="M144 2h8v4h-2v1h-2v-1h-1v3h5v2h-6v2h6v3h-8z"/>
<rect x="168" y="2" width="12" height="16"/>
</g>
<path d="M169.500 4.500l9 11m0-11l-9 11" stroke="#3b3b3b" stroke-width="2.200" shape-rendering="auto"/>
</svg>
<div id="taskbar" class="a">
<!-- mint menu -->
<svg class="a" style="left:5px;top:3px" width="22" height="22" viewBox="0 0 22 22"><circle cx="11" cy="11" r="9.800" fill="none" stroke="#d8d8d8" stroke-width="1.800"/><path d="M6.500 6v6.500a2.500 2.500 0 0 0 2.500 2.500h4.500a2.500 2.500 0 0 0 2.500-2.500v-3.500a1.700 1.700 0 0 0-3.400 0v3m0-3a1.700 1.700 0 0 0-3.400 0v3" fill="none" stroke="#d8d8d8" stroke-width="1.500"/></svg>
<!-- camera -->
<svg class="a" style="left:35px;top:4px" width="20" height="20" viewBox="0 0 20 20"><rect width="20" height="20" rx="3.500" fill="#3b62a6"/><rect y="16" width="20" height="4" rx="2" fill="#2c4c86"/><rect x="3" y="6" width="14" height="9.500" rx="1" fill="#fff"/><rect x="8" y="3.500" width="5" height="1.300" fill="#fff"/><circle cx="12" cy="10.800" r="2.700" fill="#3b62a6"/><circle cx="12" cy="10.800" r="1.600" fill="#fff"/><rect x="4.500" y="7.500" width="2.500" height="1.300" fill="#3b62a6"/></svg>
<!-- chrome -->
<svg class="a" style="left:62px;top:4px" width="20" height="20" viewBox="0 0 20 20"><circle cx="10" cy="10" r="10" fill="#e8b92a"/><path d="M10 10L1.340 5A10 10 0 0 1 18.660 5z" fill="#d9423a"/><path d="M10 10L1.340 5A10 10 0 0 0 10 20z" fill="#3a9c52"/><path d="M10 10L18.660 5A10 10 0 0 1 10 20z" fill="#f0c42c"/><path d="M10 0A10 10 0 0 1 18.660 5H10z" fill="#d9423a"/><circle cx="10" cy="10" r="4.800" fill="#f0f0f0"/><circle cx="10" cy="10" r="3.900" fill="#4a8be0"/></svg>
<!-- calculator -->
<svg class="a" style="left:89px;top:4px" width="20" height="20" viewBox="0 0 20 20"><rect width="20" height="20" rx="3" fill="#5a5a5a"/><path d="M10 10h7a3 3 0 0 1 3 3v4a3 3 0 0 1-3 3h-7z" fill="#f07820"/><path d="M0 9.600h20M9.600 0v20" stroke="#2e2e2e" stroke-width="0.800"/><path d="M2.500 5h5M5 2.500v5M12.500 5h5M3 13l4 4m0-4l-4 4M12.500 13.700h5M12.500 16.300h5" stroke="#fff" stroke-width="1.300"/></svg>
<!-- terminal -->
<svg class="a" style="left:115px;top:3px" width="22" height="22" viewBox="0 0 22 22"><rect x="0.500" y="0.500" width="21" height="21" rx="4" fill="#1c1c1c" stroke="#111"/><text x="3.500" y="9.500" font-size="7.500" font-weight="bold" fill="#e0e0e0" font-family="Liberation Mono, monospace">$_</text></svg>
<!-- green window -->
<svg class="a" style="left:141px;top:4px" width="22" height="19" viewBox="0 0 22 19"><rect width="22" height="19" rx="1" fill="#86aa55"/><rect width="22" height="4" fill="#6c8c42"/></svg>
<!-- folder -->
<svg class="a" style="left:176px;top:5px" width="22" height="18" viewBox="0 0 22 18"><path d="M5 2.500l1-2h7l1 2z" fill="#fff"/><rect y="2.500" width="22" height="15.500" rx="2" fill="#86aa55"/></svg>
<!-- terminal 2 -->
<svg class="a" style="left:203px;top:3px" width="22" height="22" viewBox="0 0 22 22"><rect x="0.500" y="0.500" width="21" height="21" rx="4" fill="#1c1c1c" stroke="#111"/><text x="3.500" y="9.500" font-size="7.500" font-weight="bold" fill="#e0e0e0" font-family="Liberation Mono, monospace">$_</text></svg>
<!-- orange fox -->
<svg class="a" style="left:231px;top:4px" width="20" height="20" viewBox="0 0 20 20"><rect width="20" height="20" rx="3.500" fill="#e8672e"/><path d="M10 3.500a6.500 6.500 0 1 0 6.500 6.500c0-2-0.800-3.500-1.500-4.500c0.300 2-0.500 3-1 3c-0.500-2.500-2.500-3-2.500-5.500c-1.500 1-2 2.500-2 3.500c-1-0.200-1.500-1-1.500-1.700c-1 1-1.500 2.500-1.200 4a3.700 3.700 0 1 0 7-1" fill="#fff" fill-rule="evenodd"/><circle cx="10" cy="11" r="2.600" fill="#e8672e"/></svg>
<!-- dots + green bar -->
<div class="a" style="left:270px;top:18px;width:2px;height:2px;background:#ddd;box-shadow:6px 0 0 #ddd,12px 0 0 #ddd,18px 0 0 #ddd"></div>
<div class="a" style="left:274px;top:0;width:9px;height:28px;background:#8fb266"></div>
<!-- search -->
<svg class="a" style="left:296px;top:4px" width="20" height="20" viewBox="0 0 20 20"><rect width="20" height="20" rx="3" fill="#d8d8d8"/><circle cx="11.500" cy="8.500" r="4.800" fill="none" stroke="#3a3a3a" stroke-width="1.700"/><path d="M8 12l-4.500 4.500" stroke="#3a3a3a" stroke-width="2" stroke-linecap="round"/></svg>
<!-- weather -->
<svg class="a" style="left:345px;top:6px" width="16" height="14" viewBox="0 0 16 14"><path d="M3.500 13.500a3.300 3.300 0 0 1-0.500-6.500a3 3 0 0 1 3.500-2.500c0.300-2 1-3.500 2-3.500s1.500 1.500 1.800 3.500a3 3 0 0 1 3 2.700a3.200 3.200 0 0 1-0.800 6.300z" fill="#e8eef8"/><path d="M4 13.500h8.500" stroke="#9ab0d0" stroke-width="1"/></svg>
<span class="a fit" style="left:363.40px;transform:scaleX(0.9516);transform-origin:0 50%;top:6.700px;font-size:13.400px">70 °F</span>
<!-- tasks -->
<svg class="a" style="left:582px;top:6px" width="16" height="16" viewBox="0 0 20 20"><circle cx="10" cy="10" r="10" fill="#e8b92a"/><path d="M10 10L1.340 5A10 10 0 0 1 18.660 5z" fill="#d9423a"/><path d="M10 10L1.340 5A10 10 0 0 0 10 20z" fill="#3a9c52"/><path d="M10 10L18.660 5A10 10 0 0 1 10 20z" fill="#f0c42c"/><path d="M10 0A10 10 0 0 1 18.660 5H10z" fill="#d9423a"/><circle cx="10" cy="10" r="4.800" fill="#f0f0f0"/><circle cx="10" cy="10" r="3.900" fill="#4a8be0"/></svg>
<span class="a fit" style="left:606.10px;transform:scaleX(0.9703);transform-origin:0 50%;top:6.700px;font-size:13.400px">5 W…</span>
<div class="a" style="left:651px;top:0;width:73px;height:28px;background:#8fb266"></div>
<svg class="a" style="left:655px;top:12px;overflow:hidden" width="16" height="10" viewBox="0 0 349 220" preserveAspectRatio="none"><use href="#photo"/></svg><svg class="a" style="left:659px;top:6px" width="13" height="11" viewBox="0 0 13 11"><path d="M1 9c-1-3 0-5 2-6l1-2.500l2 2h3l2.500-2.500l0.500 4c1 2 0.500 4-0.500 5.500c-3-1.500-7-1.500-10.500-0.500z" fill="#b4b4b4" opacity="0.900"/></svg>
<span class="a fit" style="left:678.90px;transform:scaleX(1.0344);transform-origin:0 50%;top:6.700px;font-size:13.400px;color:#fff">*[de…</span>
<svg class="a" style="left:728px;top:7px" width="16" height="14" viewBox="0 0 16 14"><path d="M2 2l1-1.500h5l1 1.500z" fill="#fff"/><rect y="2" width="16" height="12" rx="1.500" fill="#86aa55"/><path d="M6 5h3.500l1.500 1.500v4.500h-5z" fill="none" stroke="#4d6a2c" stroke-width="0.900"/></svg>
<span class="a fit" style="left:752.10px;transform:scaleX(0.9807);transform-origin:0 50%;top:6.700px;font-size:13.400px">Doc…</span>
<div class="a" style="left:800px;top:2px;width:24px;height:24px;background:#fff"></div>
<svg class="a" style="left:802px;top:4px" width="20" height="20" viewBox="0 0 20 20"><rect width="20" height="20" rx="4" fill="#cf2a2a"/><rect y="15" width="20" height="5" rx="2.500" fill="#a81e1e"/><path d="M7.500 5h5v5h3.500l-6 5.500l-6-5.500h3.500z" fill="#fff"/></svg>
<!-- tray -->
<svg class="a" style="left:992px;top:9px" width="14" height="14" viewBox="0 0 14 14"><circle cx="5" cy="5" r="2.500" fill="none" stroke="#3c3c3c" stroke-width="2.500" stroke-dasharray="1.500 1.100"/><circle cx="9.500" cy="10" r="2" fill="none" stroke="#3c3c3c" stroke-width="2.200" stroke-dasharray="1.300 1"/></svg>
<svg class="a" style="left:1040px;top:7px" width="24" height="17" viewBox="0 0 24 17"><path d="M2 9l19-8.500l2.500 6v10h-23v-5z" fill="#f2dc4c"/><path d="M0.500 11.500l22-4.500" stroke="#b89a20" stroke-width="1"/><path d="M2 9l19-8.500l1 3l-21 7z" fill="#f8e878"/></svg>
<span class="a fit" style="left:1076.90px;transform:scaleX(0.9726);transform-origin:0 50%;top:6.700px;font-size:13.400px;font-weight:bold;color:#4a5aa8">EN</span>
<svg class="a" style="left:1106px;top:4px" width="17" height="21" viewBox="0 0 17 21"><ellipse cx="8.500" cy="10.500" rx="7.600" ry="9.600" fill="none" stroke="#dcdcdc" stroke-width="1.700"/><path d="M4.500 6.500l7.500 7l-3.700 3.500v-13l3.700 3.500l-7.500 7" fill="none" stroke="#dcdcdc" stroke-width="1.400"/></svg>
<svg class="a" style="left:1132px;top:4px" width="16" height="21" viewBox="0 0 16 21"><path d="M5 3v-2.200h6v2.200h3.200v17h-12.400v-17z" fill="none" stroke="#dcdcdc" stroke-width="1.700"/><rect x="4.500" y="6" width="7" height="11.500" fill="#dcdcdc"/></svg>
<svg class="a" style="left:1155px;top:4px" width="22" height="21" viewBox="0 0 22 21"><path d="M11 1.200c3 1.800 6 2.800 9.800 3c0 8-3 13-9.800 16c-6.800-3-9.800-8-9.800-16c3.800-0.200 6.800-1.200 9.800-3z" fill="none" stroke="#dcdcdc" stroke-width="1.700"/><path d="M11 5c2 1.200 4 1.800 6.300 2c-0.300 5-2.300 8-6.300 10c-4-2-6-5-6.300-10c2.300-0.200 4.300-0.800 6.300-2z" fill="#dcdcdc"/></svg>
<svg class="a" style="left:1182px;top:5px" width="20" height="19" viewBox="0 0 20 19"><rect x="1" y="1" width="18" height="17" rx="2" fill="none" stroke="#dcdcdc" stroke-width="2"/><path d="M2 13h3v-1.500h10v1.500h3v4h-16z" fill="#dcdcdc"/><path d="M5 4.500h1.500v-1h7v1h1.500" fill="none" stroke="#2e2e2e" stroke-width="0"/></svg>
<svg class="a" style="left:1207px;top:5px" width="22" height="19" viewBox="0 0 22 19"><path d="M0.500 6.500h3.500l5-5v16l-5-5h-3.500z" fill="#dcdcdc"/><path d="M11.500 6a4.500 4.500 0 0 1 0 7" fill="none" stroke="#dcdcdc" stroke-width="1.600"/><path d="M14 3.500a8 8 0 0 1 0 12" fill="none" stroke="#dcdcdc" stroke-width="1.600"/><path d="M17 1.200a11 11 0 0 1 0 16.600" fill="none" stroke="#6a6a6a" stroke-width="1.600"/></svg>
<span class="a fit" style="left:1237.10px;transform:scaleX(1.0495);transform-origin:0 50%;top:6.700px;font-size:13.400px">Thu Jul 21, 1:45 AM</span>
</div>
<div id="winedge" class="a"></div>
</body></html>
